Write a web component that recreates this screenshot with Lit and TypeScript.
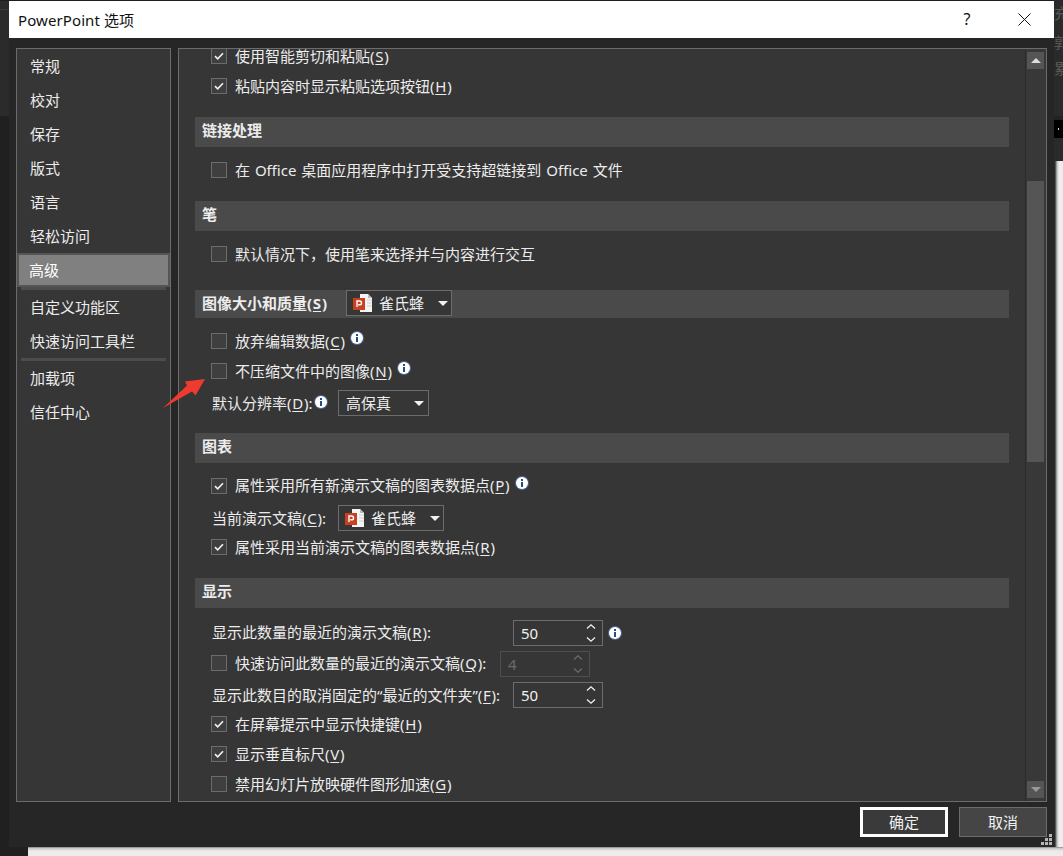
import { LitElement, html, css, svg } from "lit";
import { customElement } from "lit/decorators.js";

const check = html`<svg class="ck" width="10" height="8" viewBox="0 0 10 8"><path d="M1 4.2 3.7 6.8 9 1.2" fill="none" stroke="#f2f2f2" stroke-width="1.6"/></svg>`;

const box = (on: boolean, cls = "") => html`<span class="box ${cls}">${on ? check : ""}</span>`;

const info = (cls = "") => html`<svg class="info ${cls}" width="14" height="14" viewBox="0 0 14 14"><circle cx="7" cy="7" r="7" fill="#5f7fb5" opacity=".7"/><circle cx="7" cy="7" r="6" fill="#fff"/><rect x="6" y="3" width="2" height="2" fill="#1f4e8c"/><rect x="6" y="6" width="2" height="5" fill="#1f4e8c"/></svg>`;

const ppt = svg`<path d="M7 1h8l4 4v14H7z" fill="#f4f4f4"/><path d="M15 1v4h4z" fill="#b9b9b9"/><path d="M14 7h5M14 10h5M14 13h5" stroke="#d2d2d2"/><rect x="0" y="5" width="12" height="12" fill="#c8401f"/><path d="M4 14V8h2.6a1.9 1.9 0 0 1 0 3.8H5.2" fill="none" stroke="#fff" stroke-width="1.4"/>`;

const combo = (cls: string, text: string) => html`<span class="combo ${cls}">
  <svg class="ppt" width="20" height="20" viewBox="0 0 20 20">${ppt}</svg>
  <span class="cval">${text}</span>
  <span class="caret"></span>
</span>`;

const spin = (val: string, off = false) => html`<span class="spin ${off ? "off" : ""}">
  <span class="sval">${val}</span>
  <svg width="10" height="20" viewBox="0 0 10 20" fill="none" stroke="currentColor" stroke-width="1.3"><path d="M1 5.5 5 1.8 9 5.5M1 14.5 5 18.2 9 14.5"/></svg>
</span>`;

const key = (text: string, k: string, tail = "") => html`${text}(<u>${k}</u>)${tail}`;

@customElement("app-root")
export class AppRoot extends LitElement {
  static styles = css`
    :host { display: block; position: relative; width: 1063px; height: 856px; overflow: hidden; background: #202020;
      font-family: "Noto Sans", "Noto Sans CJK SC", sans-serif; font-size: 15px; line-height: 20px; color: #ececec; }
    u { text-decoration: underline; text-underline-offset: 2px; margin: 0 .75px; }

    .bg { position: absolute; }
    .bg-left-top { left: 0; top: 0; width: 9px; height: 116px; background: #2b2b2b; }
    .bg-left-line { left: 0; top: 9px; width: 9px; height: 1px; background: #3a3a3a; }
    .bg-top { left: 0; top: 0; width: 1063px; height: 1px; background: #1e1e1e; }
    .bg-right { left: 1054px; top: 0; width: 9px; height: 161px; background: #2a2a2a; overflow: hidden; color: #585858; }
    .faint { position: absolute; left: 0; }
    .f1 { top: 3px; } .f2 { top: 32px; } .f3 { top: 58px; }
    .strip { position: absolute; left: 0; top: 116px; width: 9px; height: 22px; background: #000; border-top: 4px solid #222; box-sizing: border-box; }
    .strip i { position: absolute; left: 4px; top: 8px; width: 1px; height: 2px; background: #ddd; }
    .bg-right-w { left: 1054px; top: 161px; width: 9px; height: 695px; background: linear-gradient(90deg, #222 0, #333 1px, #bbb 3px, #eee 5px); }
    .bg-bottom { left: 28px; top: 847px; width: 1035px; height: 9px; background: linear-gradient(180deg, #777 0, #c4c4c4 1px, #ececec 4px); }

    .dialog { position: absolute; left: 9px; top: 1px; width: 1045px; height: 846px; background: #262626; display: flex; flex-direction: column; }
    .title { flex: none; height: 37px; background: #fff; color: #111; display: flex; align-items: center; padding-left: 9px; }
    .title .t { flex: 1; letter-spacing: .1px; }
    .help { width: 20px; text-align: center; margin: 0 41px 2px 0; font-size: 16px; }
    .close { margin-right: 23px; display: flex; }

    .main { flex: none; display: flex; gap: 7px; padding: 10px 7px 0; height: 754px; }
    .nav { flex: none; width: 155px; box-sizing: border-box; border: 1px solid #6c6c6c; background: #363636; display: flex; flex-direction: column; }
    .item { height: 34px; display: flex; align-items: center; padding-left: 13px; flex: none; }
    .item.sel { box-sizing: border-box; border: 2px solid #555; background: #808080; padding-left: 10px; color: #fff; }
    .sep { height: 3px; margin: 0 4px; background: #4c4c4c; flex: none; }

    .content { flex: 1; box-sizing: border-box; border: 1px solid #6c6c6c; background: #363636; display: flex; overflow: hidden; }
    .scroll { flex: 1; padding: 0 16px; overflow: hidden; }
    .first { margin-top: -8px; }
    .head { box-sizing: border-box; height: 30px; background: #4a4a4a; display: flex; align-items: center; padding: 0 0 5px 7px; font-weight: 700; }
    .head.img { height: 28px; padding-bottom: 0; align-items: flex-start; }
    .head.img .ht { line-height: 27px; width: 144px; flex: none; white-space: nowrap; }
    .row { height: 30px; display: flex; align-items: center; padding-left: 16px; white-space: nowrap; }
    .row.plain { padding-left: 17px; }
    .box { flex: none; box-sizing: border-box; width: 16px; height: 16px; border: 1px solid #6c6c6c; background: #3f3f3f; margin-right: 8px; display: flex; align-items: center; justify-content: center; }
    .box.lift { margin-bottom: 2px; }
    .info { flex: none; margin: 0 0 6px 5px; }
    .info.flat { margin-bottom: 0; }
    .info.low { margin: 0 0 2px 1px; }
    .lift { margin-bottom: 2px; }
    .mn1 { margin-top: -1px; }
    .m1 { margin-top: 1px; } .m2 { margin-top: 2px; }
    .m8 { margin-top: 8px; } .m10 { margin-top: 10px; } .m15 { margin-top: 15px; } .m16 { margin-top: 16px; } .m21 { margin-top: 21px; }

    .combo, .drop, .spin { flex: none; box-sizing: border-box; height: 26px; border: 1px solid #6c6c6c; display: inline-flex; align-items: center; background: #363636; font-weight: 400; }
    .combo { width: 106px; padding-left: 6px; }
    .ppt { flex: none; margin-right: 6px; }
    .cval { flex: 1; }
    .caret { flex: none; width: 0; height: 0; border-left: 5px solid transparent; border-right: 5px solid transparent; border-top: 5px solid #f0f0f0; margin-right: 3px; }
    .drop { width: 91px; padding-left: 7px; margin-left: 10px; }
    .drop .caret { margin-right: 4px; }
    .spin { width: 90px; padding: 0 6px 0 7px; justify-content: space-between; color: #f0f0f0; }
    .spin.off { border-color: #4e4e4e; color: #6a6a6a; }
    .lab { width: 301px; flex: none; }
    .lab2 { width: 265px; flex: none; }
    .clab { width: 126px; flex: none; }
    .dlab { width: 101px; flex: none; }

    .bar { flex: none; width: 21px; box-sizing: border-box; border-left: 1px solid #2b2b2b; padding: 3px 2px 3px 1px; display: flex; flex-direction: column; background: #383838; }
    .btn { flex: none; height: 17px; background: #555; display: flex; align-items: center; justify-content: center; }
    .thumb { flex: none; height: 281px; background: #555; margin-top: 112px; }
    .fill { flex: 1; }
    .up { width: 0; height: 0; border-left: 5px solid transparent; border-right: 5px solid transparent; border-bottom: 5px solid #ddd; }
    .down { width: 0; height: 0; border-left: 5px solid transparent; border-right: 5px solid transparent; border-top: 5px solid #999; }

    .foot { flex: 1; display: flex; justify-content: flex-end; gap: 11px; padding: 5px 7px 0 0; }
    .b { box-sizing: border-box; width: 88px; height: 30px; display: flex; align-items: center; justify-content: center; }
    .ok { border: 3px solid #fff; background: #3a3a3a; color: #f0f0f0; }
    .cancel { border: 1px solid #6c6c6c; background: #454545; color: #f0f0f0; }
    .grip { position: absolute; right: 2px; bottom: 2px; }
    .arrow { position: absolute; left: 160px; top: 375px; }
    .ws { word-spacing: 1px; }
  `;

  render() {
    const nav1 = ["常规", "校对", "保存", "版式", "语言", "轻松访问"];
    return html`
      <div class="bg bg-left-top"></div>
      <div class="bg bg-left-line"></div>
      <div class="bg bg-top"></div>
      <div class="bg bg-right">
        <span class="faint f1">充</span><span class="faint f2">郭</span><span class="faint f3">累</span>
        <div class="strip"><i></i></div>
      </div>
      <div class="bg bg-right-w"></div>
      <div class="bg bg-bottom"></div>

      <div class="dialog">
        <div class="title">
          <span class="t">PowerPoint 选项</span>
          <span class="help">?</span>
          <svg class="close" width="13" height="13" viewBox="0 0 13 13"><path d="M.5.5l12 12M12.5.5l-12 12" stroke="#111" stroke-width="1"/></svg>
        </div>
        <div class="main">
          <div class="nav">
            ${nav1.map((n) => html`<div class="item">${n}</div>`)}
            <div class="item sel">高级</div>
            <div class="sep"></div>
            <div class="item">自定义功能区</div>
            <div class="item">快速访问工具栏</div>
            <div class="sep"></div>
            <div class="item">加载项</div>
            <div class="item">信任中心</div>
          </div>
          <div class="content">
            <div class="scroll">
              <div class="row first">${box(true)}<span>${key("使用智能剪切和粘贴", "S")}</span></div>
              <div class="row">${box(true)}<span>${key("粘贴内容时显示粘贴选项按钮", "H")}</span></div>

              <div class="head m16">链接处理</div>
              <div class="row m8">${box(false)}<span class="ws">在 Office 桌面应用程序中打开受支持超链接到 Office 文件</span></div>

              <div class="head m16">笔</div>
              <div class="row m8">${box(false)}<span>默认情况下，使用笔来选择并与内容进行交互</span></div>

              <div class="head img m21"><span class="ht">${key("图像大小和质量", "S")}</span>${combo("", "雀氏蜂")}</div>
              <div class="row m8">${box(false)}<span>${key("放弃编辑数据", "C")}</span>${info()}</div>
              <div class="row">${box(false)}<span>${key("不压缩文件中的图像", "N")}</span>${info()}</div>
              <div class="row plain m2"><span class="dlab">${key("默认分辨率", "D", ":")}</span>${info("low")}
                <span class="drop"><span class="cval">高保真</span><span class="caret"></span></span></div>

              <div class="head m15">图表</div>
              <div class="row m8">${box(true)}<span class="lift">${key("属性采用所有新演示文稿的图表数据点", "P")}</span>${info()}</div>
              <div class="row plain m2"><span class="clab">${key("当前演示文稿", "C", ":")}</span>${combo("", "雀氏蜂")}</div>
              <div class="row mn1">${box(true)}<span>${key("属性采用当前演示文稿的图表数据点", "R")}</span></div>

              <div class="head m16">显示</div>
              <div class="row plain m10"><span class="lab lift">${key("显示此数量的最近的演示文稿", "R", ":")}</span>${spin("50")}${info("flat")}</div>
              <div class="row m1">${box(false, "lift")}<span class="lab2 lift">${key("快速访问此数量的最近的演示文稿", "Q", ":")}</span>${spin("4", true)}</div>
              <div class="row plain m1"><span class="lab">${key("显示此数目的取消固定的“最近的文件夹”", "F", ":")}</span>${spin("50")}</div>
              <div class="row mn1">${box(true)}<span>${key("在屏幕提示中显示快捷键", "H")}</span></div>
              <div class="row">${box(true)}<span>${key("显示垂直标尺", "V")}</span></div>
              <div class="row">${box(false)}<span>${key("禁用幻灯片放映硬件图形加速", "G")}</span></div>
            </div>
            <div class="bar">
              <div class="btn"><span class="up"></span></div>
              <div class="thumb"></div>
              <div class="fill"></div>
              <div class="btn"><span class="down"></span></div>
            </div>
          </div>
        </div>
        <div class="foot">
          <div class="b ok">确定</div>
          <div class="b cancel">取消</div>
        </div>
        <svg class="grip" width="11" height="11" viewBox="0 0 11 11" fill="#b5b5b5"><rect x="8" y="0" width="3" height="3"/><rect x="4" y="4" width="3" height="3"/><rect x="8" y="4" width="3" height="3"/><rect x="0" y="8" width="3" height="3"/><rect x="4" y="8" width="3" height="3"/><rect x="8" y="8" width="3" height="3"/></svg>
      </div>

      <svg class="arrow" width="48" height="36" viewBox="0 0 48 36"><path d="M3 33 27 10.5 25 6.5 45 4 35.5 20.5 32 16.5Z" fill="#ee3b2d"/></svg>
    `;
  }
}
